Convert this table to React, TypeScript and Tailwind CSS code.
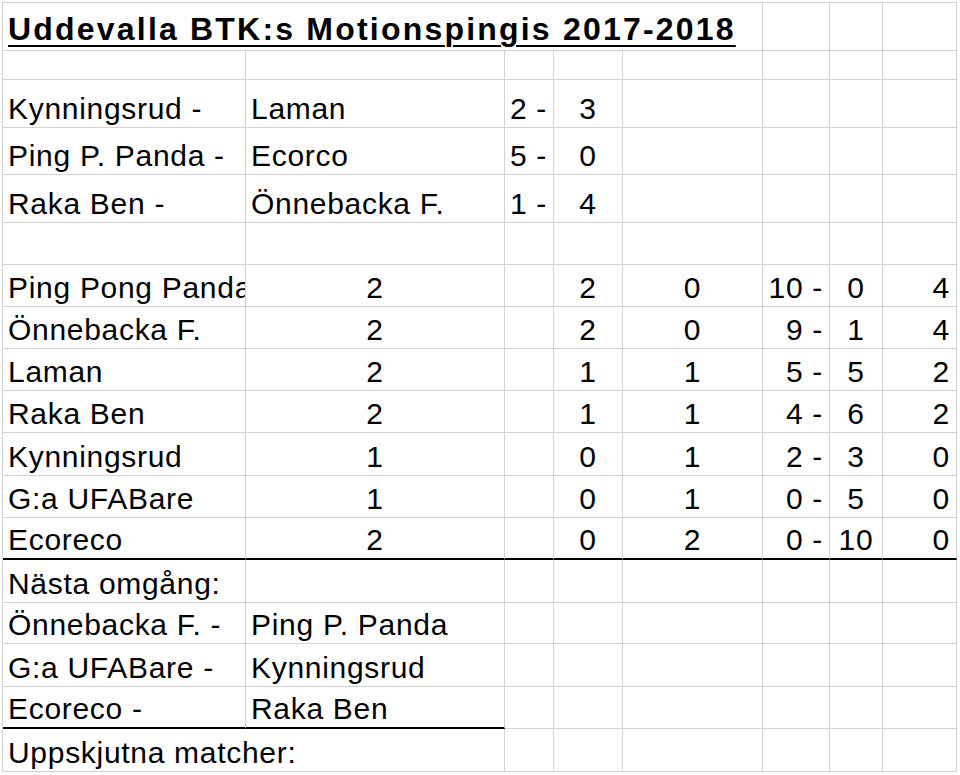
import React from "react";

type Align = "left" | "center" | "right";

const alignClass: Record<Align, string> = {
  left: "justify-start pl-[5px]",
  center: "justify-center",
  right: "justify-end pr-[6px]",
};

const Cell = ({
  children,
  align = "left",
  span = "",
  line = "border-[#d3d3d3]",
}: {
  children?: React.ReactNode;
  align?: Align;
  span?: string;
  line?: string;
}) => (
  <div
    className={`flex items-end overflow-hidden whitespace-nowrap border-r border-b border-[#d3d3d3] pb-[3px] ${alignClass[align]} ${span} ${line}`}
  >
    {children}
  </div>
);

const Empty = ({ n, line }: { n: number; line?: string }) => (
  <>
    {Array.from({ length: n }).map((_, i) => (
      <Cell key={i} line={line} />
    ))}
  </>
);

const matches = [
  ["Kynningsrud -", "Laman", "2 -", "3"],
  ["Ping P. Panda -", "Ecorco", "5 -", "0"],
  ["Raka Ben -", "Önnebacka F.", "1 -", "4"],
];

const table = [
  ["Ping Pong Panda", "2", "2", "0", "10 -", "0", "4"],
  ["Önnebacka F.", "2", "2", "0", "9 -", "1", "4"],
  ["Laman", "2", "1", "1", "5 -", "5", "2"],
  ["Raka Ben", "2", "1", "1", "4 -", "6", "2"],
  ["Kynningsrud", "1", "0", "1", "2 -", "3", "0"],
  ["G:a UFABare", "1", "0", "1", "0 -", "5", "0"],
  ["Ecoreco", "2", "0", "2", "0 -", "10", "0"],
];

const next = [
  ["Önnebacka F. -", "Ping P. Panda"],
  ["G:a UFABare -", "Kynningsrud"],
  ["Ecoreco -", "Raka Ben"],
];

const App = () => {
  return (
    <div className="min-h-screen bg-white pl-[2px] pt-[2px] font-['Liberation_Sans',Arial,sans-serif] text-[30px] leading-none tracking-[0.7px] text-black">
      <div className="grid w-max grid-cols-[243px_259px_49px_69px_140px_67px_53px_74px] grid-rows-[48px_29px_48px_47px_48px_42px_42px_42px_42px_42px_43px_42px_42px_43px_41px_43px_42px_43px] border-l border-t border-[#d3d3d3]">
        {/* title */}
        <div className="col-span-5 flex items-end overflow-visible whitespace-nowrap border-r border-b border-[#d3d3d3] pb-[5px] pl-[5px]">
          <span className="text-[32px] font-bold tracking-[2.2px] underline decoration-2 underline-offset-[5px]">
            Uddevalla BTK:s Motionspingis 2017-2018
          </span>
        </div>
        <Empty n={3} />
        <Empty n={8} />

        {matches.map((m) => (
          <React.Fragment key={m[0]}>
            <Cell>{m[0]}</Cell>
            <Cell>{m[1]}</Cell>
            <Cell align="right">{m[2]}</Cell>
            <Cell align="center">{m[3]}</Cell>
            <Empty n={4} />
          </React.Fragment>
        ))}

        <Empty n={8} />

        {table.map((r, i) => {
          const line = i === table.length - 1 ? "border-b-2 border-b-black" : "";
          return (
            <React.Fragment key={r[0]}>
              <Cell line={line}>{r[0]}</Cell>
              <Cell align="center" line={line}>{r[1]}</Cell>
              <Cell line={line} />
              <Cell align="center" line={line}>{r[2]}</Cell>
              <Cell align="center" line={line}>{r[3]}</Cell>
              <Cell align="right" line={line}>{r[4]}</Cell>
              <Cell align="center" line={line}>{r[5]}</Cell>
              <Cell align="right" line={line}>{r[6]}</Cell>
            </React.Fragment>
          );
        })}

        <Cell>Nästa omgång:</Cell>
        <Empty n={7} />

        {next.map((m, i) => {
          const line = i === next.length - 1 ? "border-b-2 border-b-black" : "";
          return (
            <React.Fragment key={m[0]}>
              <Cell line={line}>{m[0]}</Cell>
              <Cell line={line}>{m[1]}</Cell>
              <Empty n={6} />
            </React.Fragment>
          );
        })}

        <Cell span="col-span-2">Uppskjutna matcher:</Cell>
        <Empty n={6} />
      </div>
    </div>
  );
};

export default App;
